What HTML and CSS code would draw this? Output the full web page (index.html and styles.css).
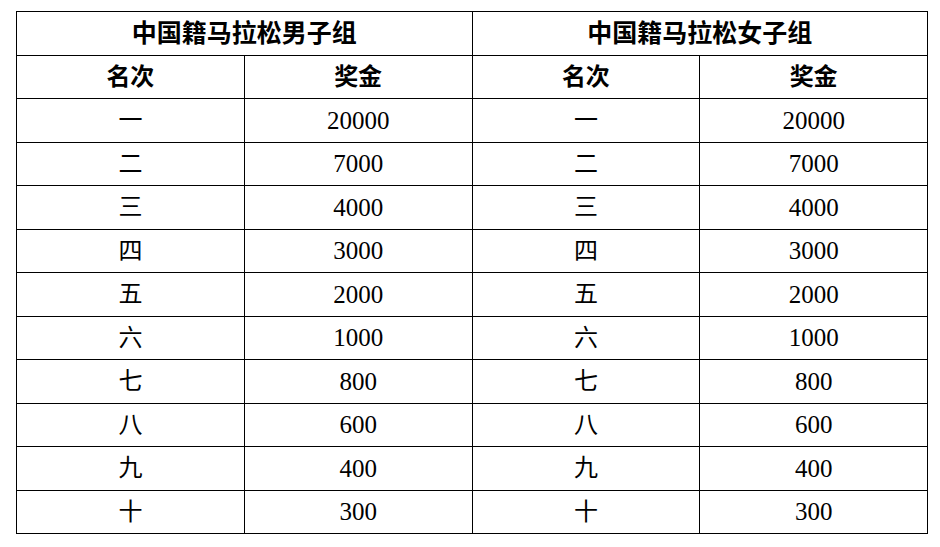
FILE: index.html
```html
<!DOCTYPE html>
<html lang="zh">
<head>
<meta charset="utf-8">
<title>中国籍马拉松奖金</title>
<link rel="stylesheet" href="styles.css">
</head>
<body>
<main class="page">
<table class="prize">
<colgroup><col class="c"><col class="c"><col class="c"><col class="c"></colgroup>
<thead>
<tr class="title"><th colspan="2">中国籍马拉松男子组</th><th colspan="2">中国籍马拉松女子组</th></tr>
<tr class="head"><th>名次</th><th>奖金</th><th>名次</th><th>奖金</th></tr>
</thead>
<tbody>
<tr><td>一</td><td class="num">20000</td><td>一</td><td class="num">20000</td></tr>
<tr><td>二</td><td class="num">7000</td><td>二</td><td class="num">7000</td></tr>
<tr><td>三</td><td class="num">4000</td><td>三</td><td class="num">4000</td></tr>
<tr><td>四</td><td class="num">3000</td><td>四</td><td class="num">3000</td></tr>
<tr><td>五</td><td class="num">2000</td><td>五</td><td class="num">2000</td></tr>
<tr><td>六</td><td class="num">1000</td><td>六</td><td class="num">1000</td></tr>
<tr><td>七</td><td class="num">800</td><td>七</td><td class="num">800</td></tr>
<tr><td>八</td><td class="num">600</td><td>八</td><td class="num">600</td></tr>
<tr><td>九</td><td class="num">400</td><td>九</td><td class="num">400</td></tr>
<tr><td>十</td><td class="num">300</td><td>十</td><td class="num">300</td></tr>
</tbody>
</table>
</main>
</body>
</html>
```
FILE: styles.css
```css
html, body {
  margin: 0;
  padding: 0;
  background: #ffffff;
}
.page {
  padding: 11px 0 0 16px;
}
.prize {
  border-collapse: collapse;
  table-layout: fixed;
  width: 912px;
  font-family: "Liberation Serif", "Noto Sans CJK SC", serif;
  font-size: 24px;
  color: #000;
}
.prize .c {
  width: 25%;
}
.prize th,
.prize td {
  border: 1px solid #000;
  height: 42.5px;
  padding: 0;
  text-align: center;
  vertical-align: middle;
  line-height: 1;
}
.prize th {
  font-weight: 700;
}
.prize .title th {
  font-size: 25px;
}
.prize td {
  font-weight: 400;
}
.prize td.num {
  font-size: 25px;
}
```
